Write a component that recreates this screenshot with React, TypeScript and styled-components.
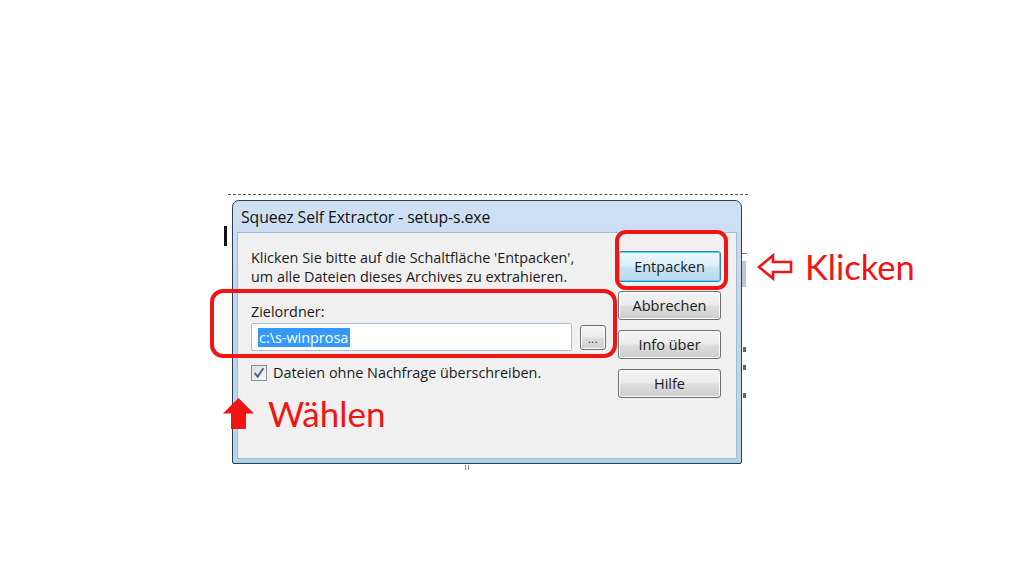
import React, { FC } from 'react'
import styled, { createGlobalStyle, css } from 'styled-components'

const GlobalStyle = createGlobalStyle`
  html, body {
    margin: 0;
    padding: 0;
    background: #ffffff;
  }
`

const RED = '#f01414'
const UI_FONT = `'Open Sans', 'Noto Sans', sans-serif`

const Slide = styled.div`
  position: relative;
  width: 1024px;
  height: 576px;
  overflow: hidden;
  box-sizing: border-box;
  padding: 194px 0 0 228px;
  background: #ffffff;
`

const Backdrop = styled.div`
  position: relative;
  width: 520px;
  height: 275px;
  box-sizing: border-box;
  padding: 5px 0 0 4px;
  border-top: 1px dashed #5a5a5a;
`

const Fragment = styled.span<{ $left: number; $top: number; $w: number; $h: number; $color: string }>`
  position: absolute;
  left: ${p => p.$left}px;
  top: ${p => p.$top}px;
  width: ${p => p.$w}px;
  height: ${p => p.$h}px;
  background: ${p => p.$color};
`

const Dialog = styled.div`
  position: relative;
  width: 510px;
  height: 264px;
  box-sizing: border-box;
  display: flex;
  flex-direction: column;
  padding: 0 4px 4px;
  border: 1px solid #2d3e50;
  border-radius: 7px 7px 2px 2px;
  background: linear-gradient(180deg, #cfe0f3 0%, #c0d7ef 40%, #b9d2ec 100%);
  box-shadow: inset 0 -2px 0 #9fd3ea;
  font-family: ${UI_FONT};
  color: #1a1a1a;
`

const TitleBar = styled.div`
  height: 31px;
  display: flex;
  align-items: center;
  padding-left: 4px;
  font-size: 15.8px;
  letter-spacing: -0.1px;
  color: #111;
`

const Client = styled.div`
  flex: 1;
  display: flex;
  justify-content: space-between;
  padding: 15px 15px 0 13px;
  background: #f0f0f0;
  border: 1px solid #a5b9cd;
`

const LeftCol = styled.div`
  display: flex;
  flex-direction: column;
  font-size: 14.4px;
`

const Message = styled.p`
  margin: 0;
  line-height: 19px;
`

const FieldLabel = styled.div`
  margin-top: 16px;
  line-height: 19px;
`

const InputRow = styled.div`
  display: flex;
  align-items: center;
  gap: 8px;
  margin-top: 2px;
`

const PathInput = styled.div`
  width: 321px;
  height: 28px;
  box-sizing: border-box;
  display: flex;
  align-items: center;
  padding-left: 6px;
  background: #ffffff;
  border: 1px solid #abbdd2;
  border-radius: 2px;
`

const Selected = styled.span`
  background: #3399ff;
  color: #ffffff;
  line-height: 19px;
  padding: 0 2px 0 1px;
`

const buttonFace = css`
  box-sizing: border-box;
  border: 1px solid #707070;
  border-radius: 3px;
  background: linear-gradient(180deg, #f4f4f4 0%, #ebebeb 48%, #dddddd 52%, #cfcfcf 100%);
  box-shadow: inset 0 0 0 1px #fbfbfb;
  font-family: ${UI_FONT};
  color: #1a1a1a;
  display: flex;
  align-items: center;
  justify-content: center;
`

const BrowseButton = styled.div`
  ${buttonFace};
  width: 26px;
  height: 25px;
  font-size: 11px;
  letter-spacing: 0.5px;
  padding-top: 2px;
`

const CheckRow = styled.div`
  display: flex;
  align-items: center;
  gap: 6px;
  margin-top: 12px;
  line-height: 19px;
`

const CheckBox = styled.span`
  width: 16px;
  height: 16px;
  box-sizing: border-box;
  border: 1px solid #8e8f8f;
  background: linear-gradient(135deg, #dcdcdc 0%, #f8f8f8 100%);
  display: flex;
  align-items: center;
  justify-content: center;
`

const RightCol = styled.div`
  display: flex;
  flex-direction: column;
  gap: 10px;
  padding-top: 3px;
`

const Button = styled.div<{ $default?: boolean }>`
  ${buttonFace};
  width: 103px;
  height: 29px;
  font-size: 14.5px;
  ${p =>
    p.$default &&
    css`
      height: 31px;
      margin-bottom: -1px;
      border-color: #3c7fb1;
      background: linear-gradient(180deg, #eaf6fd 0%, #dceff9 48%, #c9e4f3 52%, #b8d9ec 100%);
      box-shadow: inset 0 0 0 1px #48d7fb;
    `}
`

const Highlight = styled.div<{ $left: number; $top: number; $w: number; $h: number; $r: number }>`
  position: absolute;
  left: ${p => p.$left}px;
  top: ${p => p.$top}px;
  width: ${p => p.$w}px;
  height: ${p => p.$h}px;
  box-sizing: border-box;
  border: 4px solid ${RED};
  border-radius: ${p => p.$r}px;
  pointer-events: none;
`

const Note = styled.div<{ $left: number; $top: number; $gap: number; $size: number }>`
  position: absolute;
  left: ${p => p.$left}px;
  top: ${p => p.$top}px;
  display: flex;
  align-items: center;
  gap: ${p => p.$gap}px;
  font-family: Lato, 'Open Sans', sans-serif;
  font-size: ${p => p.$size}px;
  line-height: 35px;
  color: ${RED};
`

const CheckMark = () => (
  <svg width="12" height="12" viewBox="0 0 11 11">
    <path d="M1.5 5.5 L4.3 8.8 L9.5 1.2" fill="none" stroke="#4a5e9a" strokeWidth="1.8" />
  </svg>
)

const UpArrow = () => (
  <svg width="31" height="31" viewBox="0 0 31 31">
    <polygon points="15.5,0 31,15.5 23,15.5 23,31 8,31 8,15.5 0,15.5" fill={RED} />
  </svg>
)

const LeftArrow = () => (
  <svg width="36" height="28" viewBox="0 0 36 28">
    <polygon
      points="2,14 16,2.5 16,9 34,9 34,19 16,19 16,25.5"
      fill="#ffffff"
      stroke={RED}
      strokeWidth="2.6"
      strokeLinejoin="miter"
    />
  </svg>
)

const App: FC = () => (
  <Slide>
    <GlobalStyle />
    <Backdrop>
      <Fragment $left={-4} $top={31} $w={3} $h={20} $color="#111" />
      <Fragment $left={514} $top={58} $w={5} $h={1} $color="#777" />
      <Fragment $left={514} $top={66} $w={4} $h={26} $color="#b9c8d8" />
      <Fragment $left={515} $top={152} $w={3} $h={5} $color="#666" />
      <Fragment $left={515} $top={170} $w={3} $h={5} $color="#666" />
      <Fragment $left={515} $top={198} $w={3} $h={5} $color="#666" />
      <Fragment $left={237} $top={270} $w={1} $h={5} $color="#888" />
      <Fragment $left={240} $top={270} $w={1} $h={5} $color="#888" />
      <Dialog>
        <TitleBar>Squeez Self Extractor - setup-s.exe</TitleBar>
        <Client>
          <LeftCol>
            <Message>
              Klicken Sie bitte auf die Schaltfläche 'Entpacken',
              <br />
              um alle Dateien dieses Archives zu extrahieren.
            </Message>
            <FieldLabel>Zielordner:</FieldLabel>
            <InputRow>
              <PathInput>
                <Selected>c:\s-winprosa</Selected>
              </PathInput>
              <BrowseButton>...</BrowseButton>
            </InputRow>
            <CheckRow>
              <CheckBox>
                <CheckMark />
              </CheckBox>
              Dateien ohne Nachfrage überschreiben.
            </CheckRow>
          </LeftCol>
          <RightCol>
            <Button $default>Entpacken</Button>
            <Button>Abbrechen</Button>
            <Button>Info über</Button>
            <Button>Hilfe</Button>
          </RightCol>
        </Client>
      </Dialog>
    </Backdrop>

    <Highlight $left={615} $top={230} $w={113} $h={60} $r={11} />
    <Highlight $left={210} $top={289} $w={407} $h={69} $r={13} />

    <Note $left={757} $top={249} $gap={12} $size={34.5}>
      <LeftArrow />
      Klicken
    </Note>
    <Note $left={223} $top={396} $gap={14} $size={35}>
      <UpArrow />
      Wählen
    </Note>
  </Slide>
)

export default App
